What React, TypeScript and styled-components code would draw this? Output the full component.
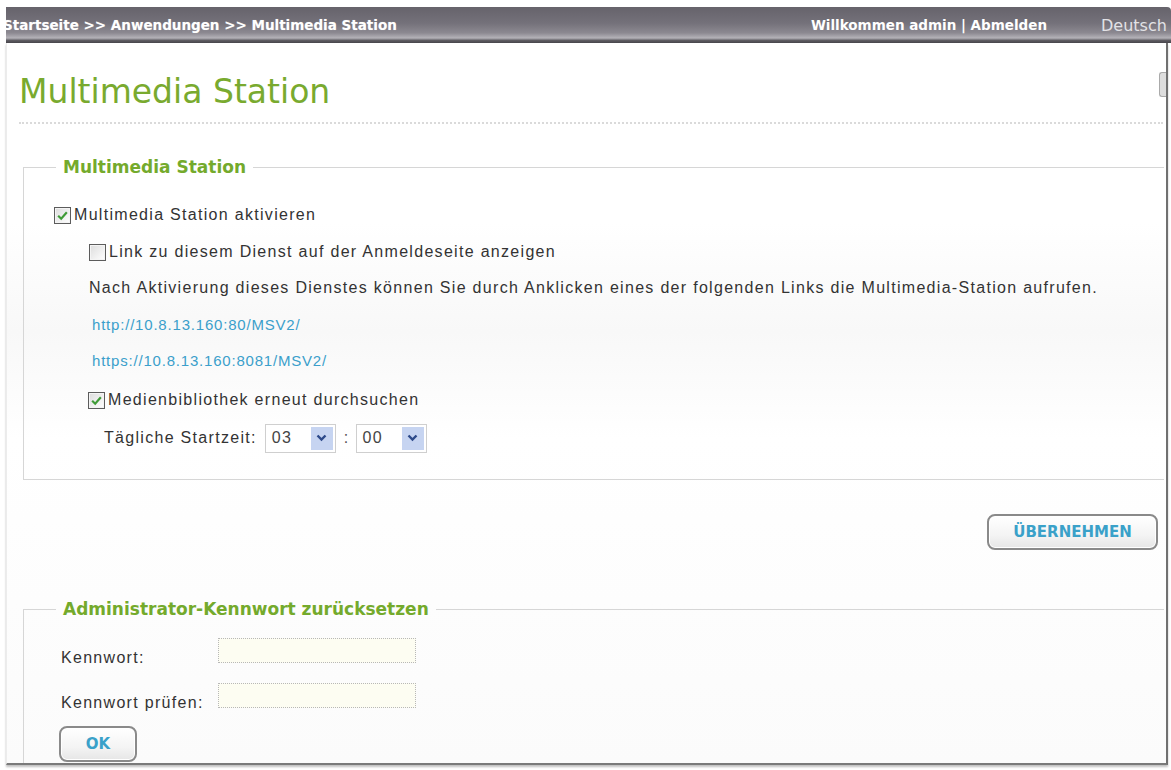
import React from "react";
import styled, { createGlobalStyle } from "styled-components";

const GlobalStyle = createGlobalStyle`
  html, body {
    margin: 0;
    padding: 0;
    background: #ffffff;
  }
  body {
    font-family: "Liberation Sans", Arial, sans-serif;
    color: #333333;
  }
`;

const Page = styled.div`
  width: 1171px;
  height: 770px;
  padding-top: 7px;
  box-sizing: border-box;
  overflow: hidden;
  background: #ffffff;
`;

const TopBar = styled.div`
  margin-left: 6px;
  height: 36px;
  display: flex;
  align-items: center;
  overflow: hidden;
  white-space: nowrap;
  border-top-right-radius: 4px;
  background: linear-gradient(
    #66636b 0%,
    #74717a 45%,
    #8c8991 72%,
    #b4b2b8 86%,
    #5d5b61 93%,
    #47454b 100%
  );
  font-family: "DejaVu Sans", Verdana, sans-serif;
  font-weight: bold;
  font-size: 13.5px;
  color: #ffffff;
`;

const Crumbs = styled.div`
  flex: 1;
  margin-left: -3px;
  text-shadow: 0 0 1px rgba(255, 255, 255, 0.4);
`;

const Welcome = styled.div`
  margin-right: 54px;
`;

const Lang = styled.div`
  font-weight: normal;
  font-size: 16px;
  color: #e2e2e6;
  width: 70px;
  flex-shrink: 0;
`;

const Frame = styled.div`
  position: relative;
  margin-left: 6px;
  width: 1162px;
  height: 722px;
  box-sizing: border-box;
  overflow: hidden;
  border-left: 1px solid #ececec;
  border-right: 2px solid #707070;
  border-bottom: 2px solid #7a7a7a;
  box-shadow: 0 2px 2px rgba(0, 0, 0, 0.25);
  background: linear-gradient(#ffffff 0%, #ffffff 25%, #f8f8f8 40%, #ffffff 55%, #fbfbfb 100%);
`;

const SideHandle = styled.div`
  position: absolute;
  top: 29px;
  right: 0;
  width: 6px;
  height: 23px;
  border: 1px solid #aaaaaa;
  border-right: none;
  border-radius: 3px 0 0 3px;
  background: #dddddd;
`;

const Title = styled.h1`
  margin: 29px 0 0 12px;
  font-family: "DejaVu Sans", Verdana, sans-serif;
  font-weight: normal;
  font-size: 33px;
  line-height: 40px;
  color: #79aa2f;
`;

const DottedRule = styled.div`
  margin: 10px 3px 0 12px;
  border-top: 2px dotted #dadada;
`;

const Box = styled.fieldset<{ $top: number; $bottom: number }>`
  margin: ${(p) => p.$top}px 2px 0 16px;
  padding: 0 0 ${(p) => p.$bottom}px 0;
  border: 1px solid #d6d6d6;
  border-right: none;
  min-width: 0;
`;

const Legend = styled.legend`
  margin-left: 32px;
  padding: 0 7px;
  font-family: "DejaVu Sans", Verdana, sans-serif;
  font-weight: bold;
  font-size: 17px;
  line-height: 20px;
  color: #74aa2c;
`;

const Rows = styled.div<{ $pad: number }>`
  padding-top: ${(p) => p.$pad}px;
  display: flex;
  flex-direction: column;
`;

const Row = styled.div<{ $indent: number; $space?: number; $h?: number }>`
  display: flex;
  align-items: center;
  height: ${(p) => p.$h ?? 36}px;
  margin-top: ${(p) => p.$space ?? 0}px;
  padding-left: ${(p) => p.$indent}px;
  font-size: 16px;
  letter-spacing: 1.3px;
  color: #333333;
  white-space: nowrap;
`;

const Check = styled.span`
  display: inline-flex;
  align-items: center;
  justify-content: center;
  width: 15px;
  height: 15px;
  margin-right: 3px;
  border: 1px solid #5c5c5c;
  box-shadow: inset 0 0 0 1px #f4f4f4;
  background: linear-gradient(135deg, #dcdcdc, #ffffff);
  flex-shrink: 0;
`;

const LinkText = styled.a`
  font-size: 15px;
  letter-spacing: 0.8px;
  color: #3b9fcb;
  text-decoration: none;
`;

const Select = styled.div`
  display: flex;
  align-items: stretch;
  width: 71px;
  height: 29px;
  box-sizing: border-box;
  border: 1px solid #cfcfcf;
  background: #ffffff;
`;

const SelectValue = styled.div`
  flex: 1;
  display: flex;
  align-items: center;
  padding-left: 6px;
  font-size: 16px;
  color: #444;
`;

const SelectArrow = styled.div`
  width: 22px;
  margin: 2px;
  display: flex;
  align-items: center;
  justify-content: center;
  background: #c6d4f1;
`;

const Colon = styled.span`
  margin: 0 6px 0 8px;
  color: #555;
`;

const TimeLabel = styled.span`
  margin-right: 8px;
`;

const ButtonRow = styled.div`
  display: flex;
  justify-content: flex-end;
  margin-top: 34px;
  padding-right: 8px;
`;

const Button = styled.button<{ $w: number }>`
  width: ${(p) => p.$w}px;
  height: 36px;
  border: 2px solid #8a8a8a;
  border-radius: 8px;
  background: linear-gradient(#ffffff, #f4f4f4 60%, #e6e6e6);
  box-shadow: inset 0 0 0 1px #ffffff;
  font-family: "DejaVu Sans", Verdana, sans-serif;
  font-weight: bold;
  font-size: 15px;
  color: #3aa1c9;
  padding: 0;
  cursor: pointer;
`;

const Label = styled.span`
  width: 157px;
`;

const Field = styled.div`
  width: 198px;
  height: 25px;
  margin-bottom: 15px;
  box-sizing: border-box;
  border: 1px dotted #b8b8b8;
  background: #fdfdf2;
`;

const CheckBox = ({ on }: { on: boolean }) => (
  <Check>
    {on && (
      <svg width="13" height="13" viewBox="0 0 12 12">
        <path d="M2 6.2 L4.8 9 L10 3" fill="none" stroke="#3f9b37" strokeWidth="2" />
      </svg>
    )}
  </Check>
);

const Dropdown = ({ value }: { value: string }) => (
  <Select>
    <SelectValue>{value}</SelectValue>
    <SelectArrow>
      <svg width="11" height="8" viewBox="0 0 11 8">
        <path d="M1.5 1.5 L5.5 5.5 L9.5 1.5" fill="none" stroke="#2d4a8a" strokeWidth="2.4" />
      </svg>
    </SelectArrow>
  </Select>
);

const App = () => {
  return (
    <Page>
      <GlobalStyle />
      <TopBar>
        <Crumbs>Startseite &gt;&gt; Anwendungen &gt;&gt; Multimedia Station</Crumbs>
        <Welcome>Willkommen admin | Abmelden</Welcome>
        <Lang>Deutsch</Lang>
      </TopBar>
      <Frame>
        <SideHandle />
        <Title>Multimedia Station</Title>
        <DottedRule />

        <Box $top={33} $bottom={23}>
          <Legend>Multimedia Station</Legend>
          <Rows $pad={20}>
            <Row $indent={30}>
              <CheckBox on />
              Multimedia Station aktivieren
            </Row>
            <Row $indent={65} $space={1}>
              <CheckBox on={false} />
              Link zu diesem Dienst auf der Anmeldeseite anzeigen
            </Row>
            <Row $indent={65}>
              Nach Aktivierung dieses Dienstes können Sie durch Anklicken eines der folgenden Links die
              Multimedia-Station aufrufen.
            </Row>
            <Row $indent={68}>
              <LinkText href="#">http://10.8.13.160:80/MSV2/</LinkText>
            </Row>
            <Row $indent={68}>
              <LinkText href="#">https://10.8.13.160:8081/MSV2/</LinkText>
            </Row>
            <Row $indent={64} $space={4}>
              <CheckBox on />
              Medienbibliothek erneut durchsuchen
            </Row>
            <Row $indent={80} $space={2}>
              <TimeLabel>Tägliche Startzeit:</TimeLabel>
              <Dropdown value="03" />
              <Colon>:</Colon>
              <Dropdown value="00" />
            </Row>
          </Rows>
        </Box>

        <ButtonRow>
          <Button $w={171}>ÜBERNEHMEN</Button>
        </ButtonRow>

        <Box $top={49} $bottom={25}>
          <Legend>Administrator-Kennwort zurücksetzen</Legend>
          <Rows $pad={19}>
            <Row $indent={37} $h={40}>
              <Label>Kennwort:</Label>
              <Field />
            </Row>
            <Row $indent={37} $space={4} $h={42}>
              <Label>Kennwort prüfen:</Label>
              <Field />
            </Row>
            <Row $indent={35} $h={40}>
              <Button $w={78}>OK</Button>
            </Row>
          </Rows>
        </Box>
      </Frame>
    </Page>
  );
};

export default App;
